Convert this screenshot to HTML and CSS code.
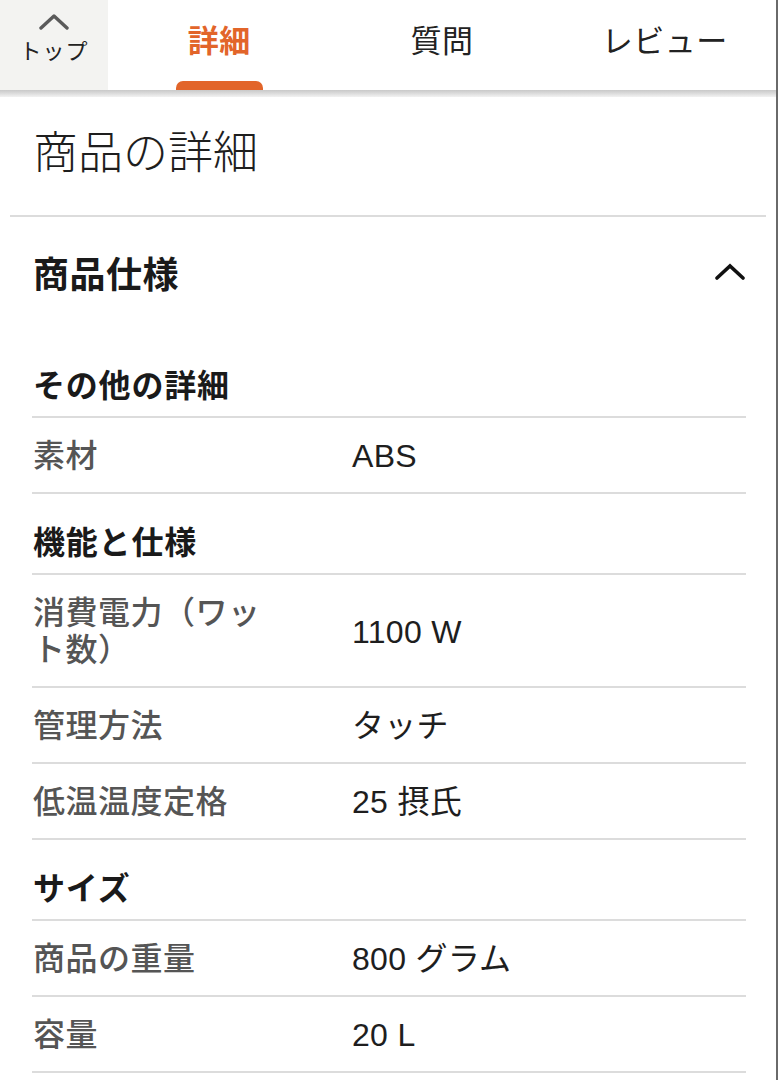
FILE: index.html
```html
<!DOCTYPE html>
<html lang="ja">
<head>
<meta charset="utf-8">
<title>商品の詳細</title>
<link rel="stylesheet" href="styles.css">
</head>
<body>
<div class="page">
  <header class="tabbar">
    <div class="top-tab">
      <svg class="top-chev" width="30" height="18" viewBox="0 0 30 18"><polyline points="2,15 15,3 28,15" fill="none" stroke="#5a5a5a" stroke-width="3.4" stroke-linecap="round" stroke-linejoin="round"/></svg>
      <span class="top-label">トップ</span>
    </div>
    <nav class="tabs">
      <div class="tab active">詳細<span class="tab-bar"></span></div>
      <div class="tab">質問</div>
      <div class="tab">レビュー</div>
    </nav>
  </header>
  <div class="shadow"></div>

  <h1 class="title">商品の詳細</h1>

  <section class="spec">
    <div class="spec-head">
      <h2 class="spec-title">商品仕様</h2>
      <svg class="spec-chev" width="30" height="18" viewBox="0 0 30 18"><polyline points="2,15 15,3 28,15" fill="none" stroke="#111" stroke-width="3.6" stroke-linecap="round" stroke-linejoin="miter"/></svg>
    </div>
    <div class="list">
      <h3 class="group">その他の詳細</h3>
      <div class="row"><div class="label">素材</div><div class="value">ABS</div></div>

      <h3 class="group">機能と仕様</h3>
      <div class="row"><div class="label">消費電力（ワット数）</div><div class="value">1100 W</div></div>
      <div class="row"><div class="label">管理方法</div><div class="value">タッチ</div></div>
      <div class="row"><div class="label">低温温度定格</div><div class="value">25 摂氏</div></div>

      <h3 class="group">サイズ</h3>
      <div class="row"><div class="label">商品の重量</div><div class="value">800 グラム</div></div>
      <div class="row"><div class="label">容量</div><div class="value">20 L</div></div>
    </div>
  </section>
</div>
</body>
</html>
```

FILE: styles.css
```css
html, body {
  margin: 0;
  padding: 0;
  background: #ffffff;
}
body {
  font-family: "Noto Sans CJK JP", "Noto Sans", sans-serif;
  color: #1b1b1b;
}
.page {
  width: 776px;
  min-height: 1080px;
  border-right: 2px solid #6a6a6a;
  overflow: hidden;
}

/* tab bar */
.tabbar {
  display: flex;
  height: 90px;
}
.top-tab {
  width: 108px;
  background: #f3f3f1;
  display: flex;
  flex-direction: column;
  align-items: center;
  padding-top: 13px;
  box-sizing: border-box;
}
.top-chev {
  display: block;
}
.top-label {
  font-size: 22px;
  line-height: 30px;
  color: #222;
  margin-top: 3px;
  letter-spacing: 1px;
}
.tabs {
  flex: 1;
  display: grid;
  grid-template-columns: 1fr 1fr 1fr;
}
.tab {
  position: relative;
  display: flex;
  justify-content: center;
  padding-top: 17px;
  font-size: 31px;
  line-height: 44px;
  color: #222;
  letter-spacing: 0.5px;
}
.tab.active {
  color: #e2652a;
  font-weight: 700;
}
.tab-bar {
  position: absolute;
  left: 68px;
  bottom: 0;
  width: 87px;
  height: 9px;
  background: #e2652a;
  border-radius: 7px 7px 0 0;
}
.shadow {
  height: 7px;
  background: linear-gradient(#c9c9c9, #d8d8d8 40%, #f2f2f2);
}

/* title */
.title {
  margin: 0 10px;
  padding: 23px 23px 35px;
  font-size: 45px;
  line-height: 60px;
  font-weight: 300;
  color: #1e1e1e;
  border-bottom: 2px solid #dcdcdc;
}

/* spec section */
.spec-head {
  display: flex;
  justify-content: space-between;
  align-items: center;
  padding: 34px 30px 44px 33px;
}
.spec-title {
  margin: 0;
  font-size: 36px;
  line-height: 42px;
  font-weight: 700;
  color: #1a1a1a;
  letter-spacing: 0.5px;
}
.spec-chev {
  display: block;
  margin-right: 1px;
}
.list {
  margin: 0 30px 0 32px;
}
.group {
  margin: 0;
  padding: 28px 0 14px 1px;
  font-size: 32px;
  line-height: 37px;
  font-weight: 700;
  color: #1a1a1a;
  border-bottom: 2px solid #dcdcdc;
  letter-spacing: 0.8px;
}
.row {
  display: grid;
  grid-template-columns: 320px 1fr;
  align-items: center;
  padding: 17px 0 20px;
  border-bottom: 2px solid #dcdcdc;
  font-size: 32px;
  line-height: 37px;
}
.label {
  padding-left: 1px;
  padding-right: 64px;
  color: #555555;
  font-weight: 500;
  letter-spacing: 0.5px;
}
.value {
  font-family: "Liberation Sans", "Noto Sans CJK JP", sans-serif;
  color: #1e1e1e;
  font-weight: 400;
  letter-spacing: 0.3px;
  line-height: 31px;
  padding-top: 6px;
}
```
